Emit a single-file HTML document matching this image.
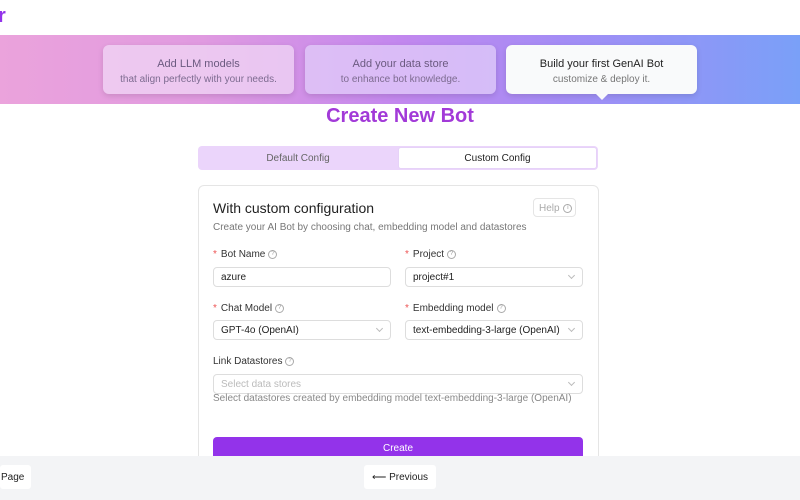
<!DOCTYPE html>
<html><head><style>
*{box-sizing:border-box;margin:0;padding:0}
body{width:800px;height:500px;overflow:hidden;background:#fff;font-family:"Liberation Sans",sans-serif;position:relative}
.abs{position:absolute}
.banner{left:0;top:35px;width:800px;height:69px;background:linear-gradient(90deg,#eba3dc 0%,#e09ae0 25%,#c287ee 50%,#a48cf5 70%,#7aa0f8 100%)}
.card{top:45px;width:191px;height:49px;border-radius:6px;text-align:center;font-size:11px;color:#6b5a80;padding-top:12px;line-height:15px;box-shadow:0 2px 6px rgba(0,0,0,.12)}
.card small{font-size:10px;display:block;color:#7d6b90}
.lbl{font-size:10px;color:#333}
.lbl b{color:#e55;font-weight:normal;margin-right:4px}
.q{display:inline-block;width:9px;height:9px;border:1px solid #aaa;border-radius:50%;font-size:6px;line-height:7px;text-align:center;color:#999;vertical-align:middle;margin-left:3px}
.inp{height:20px;border:1px solid #ddd;border-radius:4px;font-size:10px;color:#222;padding:4px 7px;line-height:11px}
.chev{position:absolute;right:8px;top:5px;width:5px;height:5px;border-right:1px solid #bbb;border-bottom:1px solid #bbb;transform:rotate(45deg)}
</style></head><body>
<div class="abs" style="left:-2px;top:5px;font-size:20px;color:#9333ea;font-weight:bold">r</div>
<div class="abs banner"></div>
<div class="abs card" style="left:103px;background:rgba(240,215,245,.75)">Add LLM models<small>that align perfectly with your needs.</small></div>
<div class="abs card" style="left:305px;background:rgba(225,205,250,.75)">Add your data store<small>to enhance bot knowledge.</small></div>
<div class="abs card" style="left:506px;background:#f9fafb;color:#222">Build your first GenAI Bot<small style="color:#777">customize &amp; deploy it.</small></div>
<div class="abs" style="left:596px;top:94px;width:0;height:0;border-left:6px solid transparent;border-right:6px solid transparent;border-top:6px solid #f9fafb"></div>
<div class="abs" style="left:0;width:800px;top:105px;text-align:center;font-size:20px;font-weight:bold;color:#a23ad8">Create New Bot</div>
<div class="abs" style="left:198px;top:146px;width:400px;height:24px;background:#ebd5fb;border-radius:4px"></div>
<div class="abs" style="left:198px;top:147px;width:200px;height:24px;text-align:center;font-size:10px;line-height:24px;color:#666">Default Config</div>
<div class="abs" style="left:398px;top:147px;width:199px;height:22px;background:#fff;border:1px solid #e6d2f8;border-radius:3px;text-align:center;font-size:10px;line-height:22px;color:#222">Custom Config</div>
<div class="abs" style="left:198px;top:185px;width:401px;height:300px;border:1px solid #e5e5e5;border-radius:6px"></div>
<div class="abs" style="left:213px;top:200px;font-size:14px;color:#222">With custom configuration</div>
<div class="abs" style="left:533px;top:198px;width:43px;height:19px;border:1px solid #e5e5e5;border-radius:4px;font-size:10px;color:#aaa;line-height:19px;padding-left:5px">Help <span class="q" style="margin-left:1px">i</span></div>
<div class="abs" style="left:213px;top:222px;font-size:10px;color:#777">Create your AI Bot by choosing chat, embedding model and datastores</div>
<div class="abs lbl" style="left:213px;top:249px"><b>*</b>Bot Name<span class="q">?</span></div>
<div class="abs lbl" style="left:405px;top:249px"><b>*</b>Project<span class="q">?</span></div>
<div class="abs inp" style="left:213px;top:267px;width:178px">azure</div>
<div class="abs inp" style="left:405px;top:267px;width:178px">project#1<i class="chev"></i></div>
<div class="abs lbl" style="left:213px;top:303px"><b>*</b>Chat Model<span class="q">?</span></div>
<div class="abs lbl" style="left:405px;top:303px"><b>*</b>Embedding model<span class="q">?</span></div>
<div class="abs inp" style="left:213px;top:320px;width:178px">GPT-4o (OpenAI)<i class="chev"></i></div>
<div class="abs inp" style="left:405px;top:320px;width:178px">text-embedding-3-large (OpenAI)<i class="chev"></i></div>
<div class="abs lbl" style="left:213px;top:356px">Link Datastores<span class="q">?</span></div>
<div class="abs inp" style="left:213px;top:374px;width:370px;color:#bbb">Select data stores<i class="chev"></i></div>
<div class="abs" style="left:213px;top:393px;font-size:10px;color:#888">Select datastores created by embedding model text-embedding-3-large (OpenAI)</div>
<div class="abs" style="left:213px;top:437px;width:370px;height:24px;background:#9333ea;border-radius:4px;color:#fff;font-size:10px;text-align:center;line-height:24px">Create</div>
<div class="abs" style="left:0;top:456px;width:800px;height:44px;background:#f3f4f6"></div>
<div class="abs" style="left:0;top:465px;width:31px;height:24px;background:#fff;border-radius:3px;font-size:10px;line-height:25px;padding-left:1px;color:#222">Page</div>
<div class="abs" style="left:364px;top:465px;width:72px;height:24px;background:#fff;border-radius:3px;font-size:10px;line-height:25px;text-align:center;color:#222">⟵ Previous</div>
</body></html>
